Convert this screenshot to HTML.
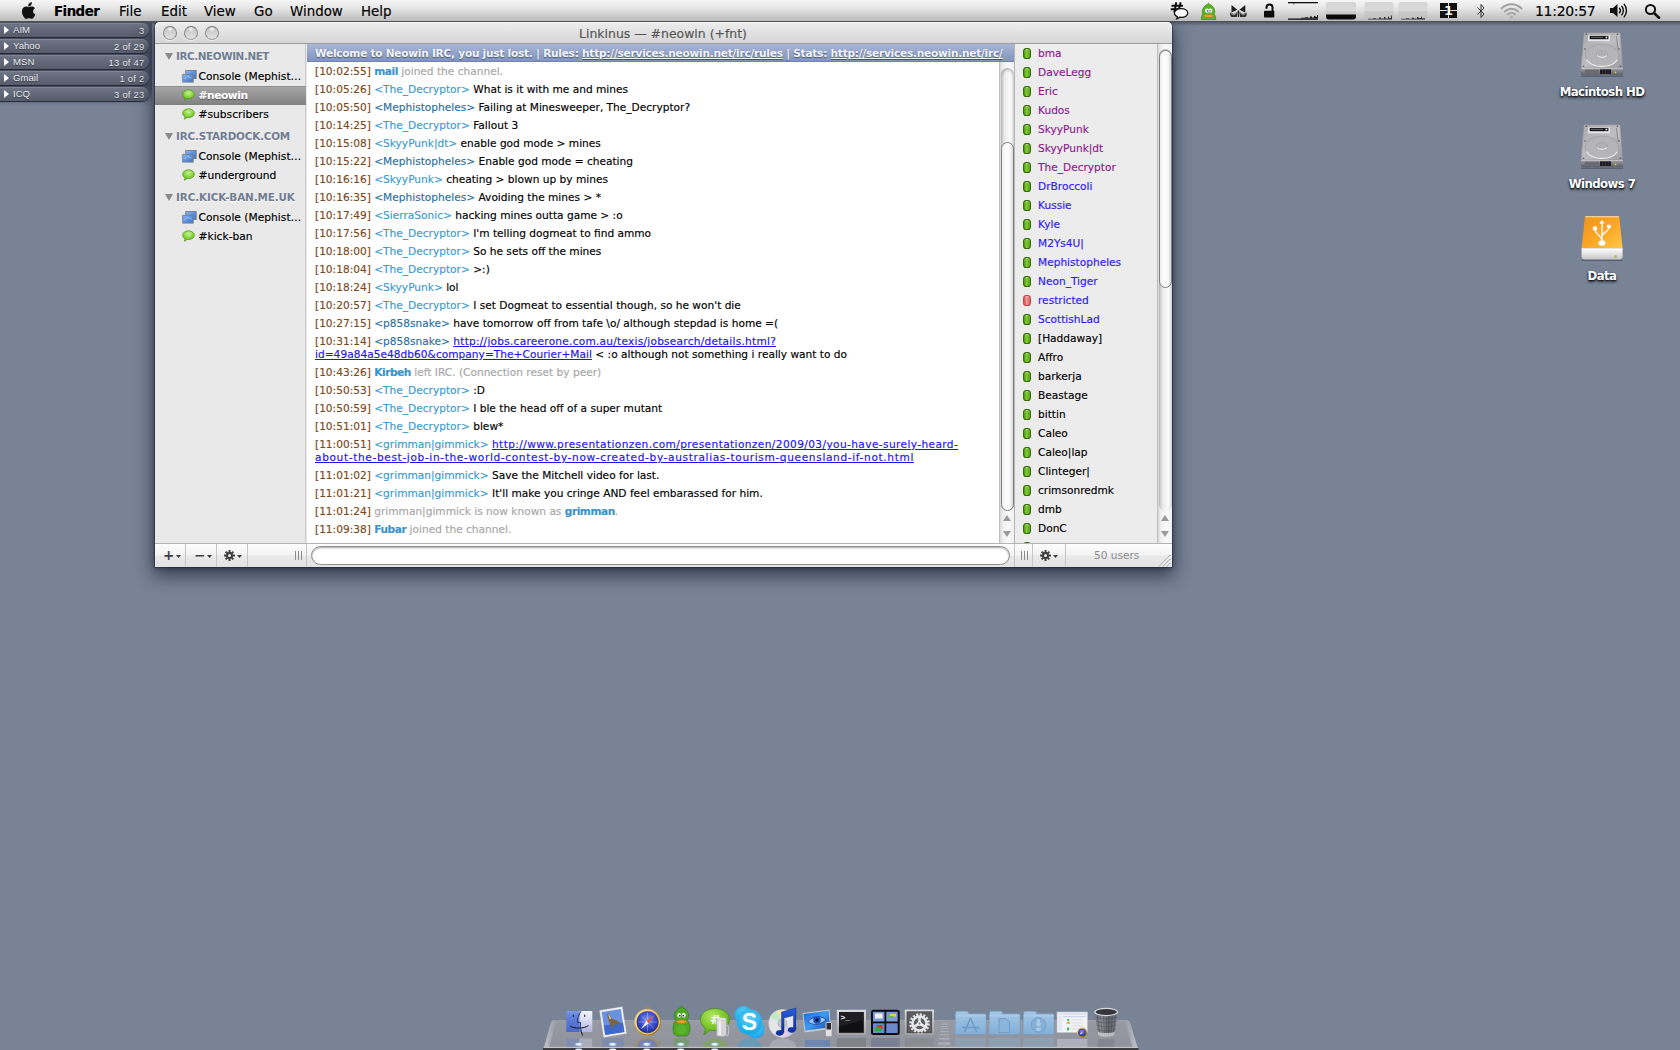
<!DOCTYPE html>
<html lang="en"><head><meta charset="utf-8"><title>Linkinus — #neowin (+fnt)</title>
<style>
*{box-sizing:border-box}
html,body{margin:0;padding:0}
body{width:1680px;height:1050px;overflow:hidden;position:relative;background:#788396;font-family:"DejaVu Sans","Liberation Sans",sans-serif;font-size:10.6px;color:#000;-webkit-font-smoothing:antialiased}
.abs{position:absolute}
/* menubar */
#menubar{position:absolute;left:0;top:0;width:1680px;height:22px;background:linear-gradient(#f6f6f6 0%,#e6e6e6 40%,#d6d6d6 60%,#bcbcbc 100%);border-bottom:1px solid #525252;z-index:5}
#mbshadow{position:absolute;left:0;top:22px;width:1680px;height:4px;background:linear-gradient(rgba(20,25,45,.38),rgba(20,25,45,0))}
#menubar .mi{position:absolute;top:1px;height:21px;line-height:21px;font-size:13.4px;color:#000;white-space:pre}
#menubar .mi.b{font-weight:bold;letter-spacing:-.55px}
/* adium */
#adium{position:absolute;left:0;top:22px;width:152px;height:84px;background:linear-gradient(180deg,#4b5265 0,#4d5467 80%,rgba(77,84,103,0) 100%)}
#adium .pill{position:absolute;left:-8px;width:157px;height:14px;border-radius:7px;background:linear-gradient(#717787 0%,#636978 45%,#565c6a 100%);box-shadow:0 1px 1px rgba(25,30,45,.9), inset 0 1px 0 rgba(255,255,255,.10);color:#e8ebf0;font-family:"Liberation Sans",sans-serif;font-size:9.6px;line-height:13px}
#adium .pill .tri{position:absolute;left:12px;top:3px;width:0;height:0;border-left:5px solid #fff;border-top:4px solid transparent;border-bottom:4px solid transparent}
#adium .pill .n{position:absolute;left:21px;top:0;text-shadow:0 1px 1px rgba(0,0,0,.45)}
#adium .pill .c{position:absolute;right:4.5px;top:1px;font-size:9.4px;letter-spacing:.25px;text-shadow:0 1px 1px rgba(0,0,0,.45)}
/* window */
#win{position:absolute;left:155px;top:22px;width:1017px;height:545px;background:#e8e8e8;border-radius:5px 5px 0 0;box-shadow:0 7px 18px 2px rgba(15,20,40,.62),0 1px 4px rgba(15,20,40,.5),0 0 0 1px rgba(50,52,65,.4)}
#tb{position:absolute;left:0;top:0;width:1017px;height:22px;border-radius:5px 5px 0 0;background:linear-gradient(#ededed,#d6d6d6);border-bottom:1px solid #9c9c9c;box-shadow:inset 0 1px 0 #f8f8f8}
#tb .title{position:absolute;left:0;width:1016px;top:1px;line-height:21px;text-align:center;font-size:12.45px;color:#555}
#tb .tl{position:absolute;top:4px;width:14px;height:14px;border-radius:50%;background:radial-gradient(circle at 50% 16%,rgba(255,255,255,.95) 0,rgba(255,255,255,.0) 26%),linear-gradient(#c4c4c4,#e2e2e2);border:1px solid;border-color:#787878 #888 #9e9e9e;box-shadow:0 1px 0 rgba(255,255,255,.6)}
#side{position:absolute;left:0;top:22px;width:151px;height:500px;background:#e9e9e9;border-right:1px solid #c9c9c9}
#side .g{position:absolute;left:21px;font-weight:bold;color:#707c92;text-shadow:0 1px 0 #fff;white-space:pre;line-height:14px;font-size:10.4px}
#side .gt{position:absolute;left:10px;width:0;height:0;border-top:7px solid #8a8a8a;border-left:4px solid transparent;border-right:4px solid transparent}
#side .it{position:absolute;left:43.500px;font-size:10.7px;white-space:pre;line-height:14px;color:#000}
#side .sel{position:absolute;left:0;width:151px;height:19px;background:linear-gradient(#a6a6a6,#808080);border-top:1px solid #8e8e8e}
#side .bub{position:absolute;left:27px;width:13px;height:12px}
#side .con{position:absolute;left:27px;width:15px;height:13px}
#chat{position:absolute;left:152px;top:22px;width:693px;height:500px;background:#fff;overflow:hidden}
#topic{position:absolute;left:152px;top:22px;width:707px;height:18px;background:linear-gradient(#a9b6d6,#8394bf);color:#f4f6fc;font-weight:normal;line-height:19px;padding-left:8px;white-space:pre;text-shadow:0 1px 1px rgba(40,50,90,.7);border-bottom:1px solid #7283b0}
#topic u{text-decoration:underline}
.m{position:absolute;left:8px;width:680px;line-height:13px;white-space:pre}
.ts{color:#7a4a1e}
.nk{color:#3a9ad0}
.nk2{color:#2b6f9c}
.gy{color:#a6a6a6}
.bn{color:#3a93c8;font-weight:bold}
.m a{color:#1a10e0;text-decoration:underline}
/* scrollers */
.scr{position:absolute;width:15px;background:linear-gradient(90deg,#cfcfcf 0,#f2f2f2 25%,#fbfbfb 60%,#e6e6e6 100%);border-left:1px solid #b4b4b4}
.knob{position:absolute;left:1px;width:13px;border-radius:7px;background:linear-gradient(90deg,#e9e9e9 0,#ffffff 35%,#f4f4f4 70%,#cfcfcf 100%);border:1px solid #8e8e8e}
/* users */
#users{position:absolute;left:859px;top:22px;width:143px;border-left:1px solid #b4b4b4;height:500px;background:#ececec;overflow:hidden}
#users .u{position:absolute;left:23px;white-space:pre;line-height:14px}
#users .d{position:absolute;left:8px;width:7.500px;height:10.500px;border-radius:3.200px/3.600px;background:linear-gradient(90deg,#439010,#84cc34 42%,#4e9e14);border:1px solid #376c0e;box-shadow:inset 0 1px 1px rgba(255,255,255,.35)}
#users .d.r{background:linear-gradient(90deg,#d24a4a,#f59a9a 45%,#d85a5a);border-color:#c04848}
.op{color:#8b1a8b}.vo{color:#2a14e6}
/* bottom */
#bot{position:absolute;left:0;top:522px;width:1016px;height:23px;background:linear-gradient(#fafafa,#e6e6e6 50%,#dcdcdc);border-top:1px solid #b9b9b9}
#topic{font-weight:bold;letter-spacing:-0.23px;font-size:10.55px}
.bn{letter-spacing:-0.45px}
#side .g{letter-spacing:-0.42px}
/* bottom bar details */
#bot{top:521px;width:1017px;height:24px;background:linear-gradient(#fdfdfd 0,#f3f3f3 48%,#e9e9e9 52%,#e2e2e2 100%);border-top:1px solid #b4b4b4}
#bot .dv{position:absolute;top:0;width:1px;height:23px;background:#c6c6c6}
#bot .grip{position:absolute;top:7px;width:7px;height:9px;background:linear-gradient(90deg,#8c8c8c 0 1px,transparent 1px 3px,#8c8c8c 3px 4px,transparent 4px 6px,#8c8c8c 6px 7px)}
#bot .arr{position:absolute;top:11px;width:5px;height:3px;background:#3c3c3c;clip-path:polygon(0 0,100% 0,50% 100%)}
#bot .pm{position:absolute;top:1px;line-height:21px;font-size:13.5px;font-weight:bold;color:#404040}
#inp{position:absolute;left:156px;top:2px;width:699px;height:19px;border-radius:9.500px;background:#fff;border:1px solid #8f8f8f;box-shadow:inset 0 1px 2px rgba(0,0,0,.35)}
#bot .cnt{position:absolute;left:939px;top:4px;line-height:14px;color:#8c8c8c;font-size:10.55px}
.sarr{position:absolute;left:3px;width:0;height:0;border-left:4px solid transparent;border-right:4px solid transparent}
.sarr.up{border-bottom:6px solid #9a9a9a}
.sarr.dn{border-top:6px solid #9a9a9a}
.scr{width:15px;background:linear-gradient(90deg,#d8d8d8 0,#efefef 20%,#fafafa 60%,#f0f0f0 100%);border-left:1px solid #bdbdbd}
.trk{position:absolute;left:1px;width:13px;border-radius:7px;background:linear-gradient(90deg,#c9c9c9 0,#ececec 30%,#fbfbfb 70%,#e4e4e4 100%);box-shadow:inset 0 2px 3px rgba(0,0,0,.25)}
.knob{left:1px;width:13px;border-radius:7px;background:linear-gradient(90deg,#ededed 0,#ffffff 40%,#f6f6f6 75%,#d4d4d4 100%);border:1px solid #7f7f7f}
.dl{position:absolute;left:1502px;margin-top:1px;width:200px;text-align:center;color:#fff;font-weight:bold;font-size:11.7px;line-height:15px;letter-spacing:-0.55px;text-shadow:0 1px 2px rgba(0,0,0,.9),0 2px 3px rgba(0,0,0,.6);white-space:pre}
.m,#users .u,#side .it,#menubar .mi,#tb .title{-webkit-text-stroke:0.15px currentColor}
.m a{color:#1c14f0}
.vo{color:#2c18f2}.op{color:#8e188e}

</style></head>
<body>
<div id="mbshadow"></div>
<div id="menubar">
<svg class="abs" style="left:19px;top:2px" width="19" height="18" viewBox="0 0 19 18"><path d="M12.9 0.3c.1 1.1-.3 2.1-1 2.9-.7.8-1.700 1.300-2.700 1.200-.1-1 .4-2.100 1-2.800.7-.8 1.900-1.300 2.700-1.300zM15.900 6.200c-.1.100-1.800 1-1.800 3.100 0 2.400 2.200 3.200 2.200 3.200 0 .100-.3 1.200-1.100 2.300-.7 1-1.400 2-2.500 2-1.100 0-1.400-.6-2.700-.6-1.200 0-1.600.600-2.700.7-1.100 0-1.900-1.100-2.600-2.100-1.400-2-2.500-5.700-1-8.200.7-1.200 2-2 3.400-2 1.100 0 2.100.7 2.700.7.700 0 1.900-.9 3.200-.7.500 0 2.100.2 2.900 1.600z" fill="#111"/></svg>
<span class="mi b" style="left:54px">Finder</span>
<span class="mi" style="left:119px">File</span>
<span class="mi" style="left:161px">Edit</span>
<span class="mi" style="left:204px">View</span>
<span class="mi" style="left:254px">Go</span>
<span class="mi" style="left:290px">Window</span>
<span class="mi" style="left:361px">Help</span>
<!-- linkinus status icon -->
<svg class="abs" style="left:1168px;top:0px" width="24" height="22" viewBox="1168 0 24 22"><g stroke="#0c0c0c" stroke-width="1.900" fill="none" stroke-linecap="butt"><path d="M1176.300 2.200L1174.300 12.500M1180.700 2.200L1178.700 10M1171.500 5.700H1183M1170.800 9.300H1179"/></g><path d="M1181 8.600C1184.800 8.600 1187.700 10.500 1187.700 13C1187.700 15.500 1184.800 17.300 1181 17.300C1180.500 17.300 1180 17.300 1179.600 17.200C1179 18.100 1178 18.700 1176.700 18.800C1177.300 18.100 1177.500 17.300 1177.300 16.600C1175.500 15.800 1174.400 14.500 1174.400 13C1174.400 10.500 1177.300 8.600 1181 8.600z" fill="#fff" stroke="#0c0c0c" stroke-width="1.300"/></svg>
<!-- adium duck -->
<svg class="abs" style="left:1199px;top:2px" width="19" height="19" viewBox="1199 2 19 19"><path d="M1208.500 3.200C1209.500 4.500 1212 5.300 1213.500 7.500C1215 9.800 1215 12 1214.200 13.800C1215.200 15.500 1215.800 17.500 1215.700 19.600H1201.300C1201.200 17.500 1201.800 15.500 1202.800 13.800C1202 12 1202 9.800 1203.500 7.500C1205 5.300 1207.500 4.500 1208.500 3.200z" fill="#58b424" stroke="#3c8e14" stroke-width=".8"/><ellipse cx="1207" cy="10.600" rx="1.900" ry="2.200" fill="#fff"/><ellipse cx="1210.400" cy="10.600" rx="1.900" ry="2.200" fill="#fff"/><circle cx="1207.400" cy="10.900" r=".8" fill="#3a5ab0"/><circle cx="1210" cy="10.900" r=".8" fill="#3a5ab0"/><path d="M1203.200 15.800C1205 14 1212 14 1213.800 15.800C1212 18 1205 18 1203.200 15.800z" fill="#f2a03a" stroke="#c06a14" stroke-width=".5"/></svg>
<!-- bowtie -->
<svg class="abs" style="left:1228px;top:3px" width="21" height="16" viewBox="1228 3 21 16"><path d="M1231.500 5L1237.300 9.800L1231.500 12.500zM1245.300 5L1239.500 9.800L1245.300 12.500z" fill="#1e1e1e"/><path d="M1230.300 12.500C1229.800 14.500 1230.300 16 1231.500 17H1236.700L1237.500 11.500L1234 14.200zM1246.500 12.500C1247 14.500 1246.500 16 1245.300 17H1240.100L1239.300 11.500L1242.800 14.200z" fill="#2c2c2c"/><rect x="1237.700" y="10.500" width="1.400" height="6.500" fill="#1e1e1e"/><path d="M1231 13.500L1234 15L1237 12.500M1245.800 13.500L1242.800 15L1239.800 12.500" fill="none" stroke="#c4c4c4" stroke-width=".7"/></svg>
<!-- open lock -->
<svg class="abs" style="left:1261px;top:2px" width="16" height="18" viewBox="1261 2 16 18"><path d="M1266.500 8.800V7.500C1266.500 5.500 1267.800 4.500 1269.500 4.500C1271.200 4.500 1272.500 5.500 1272.500 7.500V11" fill="none" stroke="#0c0c0c" stroke-width="2"/><rect x="1264" y="10.700" width="10.300" height="6.900" rx=".8" fill="#0c0c0c"/></svg>
<!-- istat cpu -->
<svg class="abs" style="left:1287px;top:1px" width="32" height="20" viewBox="0 0 32 20"><rect x="1" y="1" width="30" height="1.300" fill="#111"/><rect x="1" y="17.500" width="30" height="1.300" fill="#111"/><path d="M14 17.500V16.800H18V16.200H21V16.800H23V15.600H25V16.500H27V15H28.500V16H30V14H31V17.500z" fill="#111"/><rect x="6" y="2.300" width="1.500" height="1" fill="#555"/></svg>
<!-- istat mem -->
<svg class="abs" style="left:1325px;top:1px" width="32" height="20" viewBox="0 0 32 20"><defs><linearGradient id="ig" x1="0" y1="0" x2="0" y2="1"><stop offset="0" stop-color="#d4d4d4"/><stop offset=".5" stop-color="#dadada"/><stop offset=".52" stop-color="#cbcbcb"/><stop offset="1" stop-color="#c0c0c0"/></linearGradient><clipPath id="ic"><rect x="1" y="1" width="30" height="17.500" rx="3"/></clipPath></defs><rect x="1" y="1" width="30" height="17.500" rx="3" fill="url(#ig)"/><rect x="1" y="13.500" width="30" height="6" fill="#0a0a0a" clip-path="url(#ic)"/></svg>
<!-- istat net 1 -->
<svg class="abs" style="left:1363px;top:1px" width="32" height="20" viewBox="0 0 32 20"><rect x="1.500" y="1" width="29" height="17.500" rx="3" fill="url(#ig)"/><path d="M5 18.500V17.800H10V17.200H13V17.800H16V16.500H18V17.500H21V16H22.500V17.500H25V15.500H26V17H28V14.500H29V18.500z" fill="#333"/></svg>
<!-- istat net 2 -->
<svg class="abs" style="left:1397px;top:1px" width="32" height="20" viewBox="0 0 32 20"><rect x="1.500" y="1" width="29" height="17.500" rx="3" fill="url(#ig)"/><path d="M4 18.500V17.800H9V17.200H12V17.800H15V16.800H17V17.500H20V16H21.500V17H24V15.800H25V17.300H28V18.500z" fill="#333"/></svg>
<!-- spaces -->
<div class="abs" style="left:1440px;top:3px;width:17px;height:15px;background:#111"></div>
<div class="abs" style="left:1440px;top:10px;width:17px;height:1px;background:#e4e4e4"></div>
<div class="abs" style="left:1448px;top:3px;width:1px;height:15px;background:#e4e4e4"></div>
<span class="abs" style="left:1443px;top:2px;width:11px;height:17px;line-height:17px;text-align:center;color:#fff;font-size:13px;font-weight:bold;text-shadow:0 0 1px #111,0 0 1px #111">1</span>
<!-- bluetooth -->
<svg class="abs" style="left:1476px;top:3px" width="10" height="16" viewBox="0 0 10 16"><path d="M1.500 4.500L8 11L5 14.500V1.500L8 5L1.500 11.500" fill="none" stroke="#333" stroke-width="1" stroke-linejoin="miter"/></svg>
<!-- wifi -->
<svg class="abs" style="left:1500px;top:2px" width="23" height="17" viewBox="0 0 23 17"><g fill="none" stroke="#a2a2a2" stroke-width="2" stroke-linecap="round"><path d="M1.500 6.500C7 .8 16 .8 21.500 6.500"/><path d="M4.800 9.500C8.500 5.800 14.500 5.800 18.200 9.500"/><path d="M8 12.300C10 10.400 13 10.400 15 12.300"/></g><circle cx="11.500" cy="15" r="1.300" fill="#a8a8a8"/></svg>
<span class="mi" style="left:1535px;font-size:14px;letter-spacing:-.3px">11:20:57</span>
<!-- volume -->
<svg class="abs" style="left:1609px;top:3px" width="19" height="15" viewBox="0 0 19 15"><path d="M1 5H4L8.500 1V14L4 10H1z" fill="#111"/><g fill="none" stroke="#111" stroke-width="1.400" stroke-linecap="round"><path d="M10.500 5.200C11.600 6.500 11.600 8.500 10.500 9.800"/><path d="M12.800 3.200C14.800 5.500 14.800 9.500 12.800 11.800"/><path d="M15.200 1.200C18.200 4.800 18.200 10.200 15.200 13.800"/></g></svg>
<!-- spotlight -->
<svg class="abs" style="left:1644px;top:3px" width="17" height="16" viewBox="0 0 17 16"><circle cx="6.500" cy="6.500" r="4.600" fill="none" stroke="#111" stroke-width="2"/><path d="M10 10L15 14.800" stroke="#111" stroke-width="2.600" stroke-linecap="round"/></svg>
</div>
<div id="adium">
<div class="pill" style="top:1px"><i class="tri"></i><span class="n">AIM</span><span class="c">3</span></div>
<div class="pill" style="top:17px"><i class="tri"></i><span class="n">Yahoo</span><span class="c">2 of 29</span></div>
<div class="pill" style="top:33px"><i class="tri"></i><span class="n">MSN</span><span class="c">13 of 47</span></div>
<div class="pill" style="top:49px"><i class="tri"></i><span class="n">Gmail</span><span class="c">1 of 2</span></div>
<div class="pill" style="top:65px"><i class="tri"></i><span class="n">ICQ</span><span class="c">3 of 23</span></div>
</div>
<div id="win">
<div id="tb"><i class="tl" style="left:8px"></i><i class="tl" style="left:29px"></i><i class="tl" style="left:50px"></i><div class="title">Linkinus — #neowin (+fnt)</div></div>
<div id="side">
<i class="gt" style="top:9px"></i><span class="g" style="top:5px"><span>IRC.NEOWIN.NET</span></span>
<svg class="con" style="top:26px" viewBox="0 0 15 13"><defs><linearGradient id="cg" x1="0" y1="0" x2="1" y2="1"><stop offset="0" stop-color="#8db8f0"/><stop offset=".5" stop-color="#5c92e0"/><stop offset="1" stop-color="#3f74c8"/></linearGradient></defs><rect x="3.700" y="0.500" width="10.500" height="8" fill="url(#cg)" stroke="#77808f" stroke-width=".9"/><rect x="0.700" y="4.300" width="10.500" height="7.800" fill="url(#cg)" stroke="#77808f" stroke-width=".9"/><path d="M2 9L6 6.500L9.500 8" stroke="#b9d6fa" stroke-width=".8" fill="none" opacity=".7"/></svg><span class="it" style="top:26px">Console (Mephist…</span>
<div class="sel" style="top:42px"></div>
<svg class="bub" style="top:45px" viewBox="0 0 13 12"><defs><radialGradient id="bg" cx=".5" cy=".3" r=".7"><stop offset="0" stop-color="#c4f292"/><stop offset=".6" stop-color="#86d238"/><stop offset="1" stop-color="#58a818"/></radialGradient></defs><path d="M6.500 .8C9.800 .8 12.300 2.700 12.300 5.200C12.300 7.700 9.800 9.600 6.500 9.600C5.900 9.600 5.300 9.500 4.800 9.400C4.200 10.300 3.300 11 2.300 11.200C2.900 10.500 3.100 9.600 2.900 8.800C1.500 8 .7 6.700 .7 5.200C.7 2.700 3.200 .8 6.500 .8z" fill="url(#bg)" stroke="#4c9a1c" stroke-width=".7"/></svg><span class="it" style="top:45px;color:#fff;font-weight:bold;letter-spacing:-.45px;text-shadow:0 1px 1px rgba(0,0,0,.45)">#neowin</span>
<svg class="bub" style="top:64px" viewBox="0 0 13 12"><defs><radialGradient id="bg" cx=".5" cy=".3" r=".7"><stop offset="0" stop-color="#c4f292"/><stop offset=".6" stop-color="#86d238"/><stop offset="1" stop-color="#58a818"/></radialGradient></defs><path d="M6.500 .8C9.800 .8 12.300 2.700 12.300 5.200C12.300 7.700 9.800 9.600 6.500 9.600C5.900 9.600 5.300 9.500 4.800 9.400C4.200 10.300 3.300 11 2.300 11.200C2.900 10.500 3.100 9.600 2.900 8.800C1.500 8 .7 6.700 .7 5.200C.7 2.700 3.200 .8 6.500 .8z" fill="url(#bg)" stroke="#4c9a1c" stroke-width=".7"/></svg><span class="it" style="top:64px">#subscribers</span>
<i class="gt" style="top:89px"></i><span class="g" style="top:85px"><span style="letter-spacing:-.2px">IRC.STARDOCK.COM</span></span>
<svg class="con" style="top:106px" viewBox="0 0 15 13"><defs><linearGradient id="cg" x1="0" y1="0" x2="1" y2="1"><stop offset="0" stop-color="#8db8f0"/><stop offset=".5" stop-color="#5c92e0"/><stop offset="1" stop-color="#3f74c8"/></linearGradient></defs><rect x="3.700" y="0.500" width="10.500" height="8" fill="url(#cg)" stroke="#77808f" stroke-width=".9"/><rect x="0.700" y="4.300" width="10.500" height="7.800" fill="url(#cg)" stroke="#77808f" stroke-width=".9"/><path d="M2 9L6 6.500L9.500 8" stroke="#b9d6fa" stroke-width=".8" fill="none" opacity=".7"/></svg><span class="it" style="top:106px">Console (Mephist…</span>
<svg class="bub" style="top:125px" viewBox="0 0 13 12"><defs><radialGradient id="bg" cx=".5" cy=".3" r=".7"><stop offset="0" stop-color="#c4f292"/><stop offset=".6" stop-color="#86d238"/><stop offset="1" stop-color="#58a818"/></radialGradient></defs><path d="M6.500 .8C9.800 .8 12.300 2.700 12.300 5.200C12.300 7.700 9.800 9.600 6.500 9.600C5.900 9.600 5.300 9.500 4.800 9.400C4.200 10.300 3.300 11 2.300 11.200C2.900 10.500 3.100 9.600 2.900 8.800C1.500 8 .7 6.700 .7 5.200C.7 2.700 3.200 .8 6.500 .8z" fill="url(#bg)" stroke="#4c9a1c" stroke-width=".7"/></svg><span class="it" style="top:125px">#underground</span>
<i class="gt" style="top:150px"></i><span class="g" style="top:146px"><span style="letter-spacing:-.12px">IRC.KICK-BAN.ME.UK</span></span>
<svg class="con" style="top:167px" viewBox="0 0 15 13"><defs><linearGradient id="cg" x1="0" y1="0" x2="1" y2="1"><stop offset="0" stop-color="#8db8f0"/><stop offset=".5" stop-color="#5c92e0"/><stop offset="1" stop-color="#3f74c8"/></linearGradient></defs><rect x="3.700" y="0.500" width="10.500" height="8" fill="url(#cg)" stroke="#77808f" stroke-width=".9"/><rect x="0.700" y="4.300" width="10.500" height="7.800" fill="url(#cg)" stroke="#77808f" stroke-width=".9"/><path d="M2 9L6 6.500L9.500 8" stroke="#b9d6fa" stroke-width=".8" fill="none" opacity=".7"/></svg><span class="it" style="top:167px">Console (Mephist…</span>
<svg class="bub" style="top:186px" viewBox="0 0 13 12"><defs><radialGradient id="bg" cx=".5" cy=".3" r=".7"><stop offset="0" stop-color="#c4f292"/><stop offset=".6" stop-color="#86d238"/><stop offset="1" stop-color="#58a818"/></radialGradient></defs><path d="M6.500 .8C9.800 .8 12.300 2.700 12.300 5.200C12.300 7.700 9.800 9.600 6.500 9.600C5.900 9.600 5.300 9.500 4.800 9.400C4.200 10.300 3.300 11 2.300 11.200C2.900 10.500 3.100 9.600 2.900 8.800C1.500 8 .7 6.700 .7 5.200C.7 2.700 3.200 .8 6.500 .8z" fill="url(#bg)" stroke="#4c9a1c" stroke-width=".7"/></svg><span class="it" style="top:186px">#kick-ban</span>
</div>
<div id="chat">
<div class="m" style="top:21px"><span class="ts">[10:02:55]</span> <span class="bn">mail</span><span class="gy"> joined the channel.</span></div>
<div class="m" style="top:39px"><span class="ts">[10:05:26]</span> <span class="nk">&lt;The_Decryptor&gt;</span> What is it with me and mines</div>
<div class="m" style="top:57px"><span class="ts">[10:05:50]</span> <span class="nk2">&lt;Mephistopheles&gt;</span> Failing at Minesweeper, The_Decryptor?</div>
<div class="m" style="top:75px"><span class="ts">[10:14:25]</span> <span class="nk">&lt;The_Decryptor&gt;</span> Fallout 3</div>
<div class="m" style="top:93px"><span class="ts">[10:15:08]</span> <span class="nk">&lt;SkyyPunk|dt&gt;</span> enable god mode &gt; mines</div>
<div class="m" style="top:111px"><span class="ts">[10:15:22]</span> <span class="nk2">&lt;Mephistopheles&gt;</span> Enable god mode = cheating</div>
<div class="m" style="top:129px"><span class="ts">[10:16:16]</span> <span class="nk">&lt;SkyyPunk&gt;</span> cheating &gt; blown up by mines</div>
<div class="m" style="top:147px"><span class="ts">[10:16:35]</span> <span class="nk2">&lt;Mephistopheles&gt;</span> Avoiding the mines &gt; *</div>
<div class="m" style="top:165px"><span class="ts">[10:17:49]</span> <span class="nk">&lt;SierraSonic&gt;</span> hacking mines outta game &gt; :o</div>
<div class="m" style="top:183px"><span class="ts">[10:17:56]</span> <span class="nk">&lt;The_Decryptor&gt;</span> I'm telling dogmeat to find ammo</div>
<div class="m" style="top:201px"><span class="ts">[10:18:00]</span> <span class="nk">&lt;The_Decryptor&gt;</span> So he sets off the mines</div>
<div class="m" style="top:219px"><span class="ts">[10:18:04]</span> <span class="nk">&lt;The_Decryptor&gt;</span> &gt;:)</div>
<div class="m" style="top:237px"><span class="ts">[10:18:24]</span> <span class="nk">&lt;SkyyPunk&gt;</span> lol</div>
<div class="m" style="top:255px"><span class="ts">[10:20:57]</span> <span class="nk">&lt;The_Decryptor&gt;</span> I set Dogmeat to essential though, so he won't die</div>
<div class="m" style="top:273px"><span class="ts">[10:27:15]</span> <span class="nk2">&lt;p858snake&gt;</span> have tomorrow off from tafe \o/ although stepdad is home =(</div>
<div class="m" style="top:291px"><span class="ts">[10:31:14]</span> <span class="nk2">&lt;p858snake&gt;</span> <a style="letter-spacing:0.235px">http://jobs.careerone.com.au/texis/jobsearch/details.html?</a>
<a style="letter-spacing:0.026px">id=49a84a5e48db60&amp;company=The+Courier+Mail</a> &lt; :o although not something i really want to do</div>
<div class="m" style="top:322px"><span class="ts">[10:43:26]</span> <span class="bn">Kirbeh</span><span class="gy"> left IRC. (Connection reset by peer)</span></div>
<div class="m" style="top:340px"><span class="ts">[10:50:53]</span> <span class="nk">&lt;The_Decryptor&gt;</span> :D</div>
<div class="m" style="top:358px"><span class="ts">[10:50:59]</span> <span class="nk">&lt;The_Decryptor&gt;</span> I ble the head off of a super mutant</div>
<div class="m" style="top:376px"><span class="ts">[10:51:01]</span> <span class="nk">&lt;The_Decryptor&gt;</span> blew*</div>
<div class="m" style="top:394px"><span class="ts">[11:00:51]</span> <span class="nk">&lt;grimman|gimmick&gt;</span> <a style="letter-spacing:0.385px">http://www.presentationzen.com/presentationzen/2009/03/you-have-surely-heard-</a>
<a style="letter-spacing:0.634px">about-the-best-job-in-the-world-contest-by-now-created-by-australias-tourism-queensland-if-not.html</a></div>
<div class="m" style="top:425px"><span class="ts">[11:01:02]</span> <span class="nk">&lt;grimman|gimmick&gt;</span> Save the Mitchell video for last.</div>
<div class="m" style="top:443px"><span class="ts">[11:01:21]</span> <span class="nk">&lt;grimman|gimmick&gt;</span> It'll make you cringe AND feel embarassed for him.</div>
<div class="m" style="top:461px"><span class="ts">[11:01:24]</span> <span class="gy">grimman|gimmick is now known as </span><span class="bn">grimman</span><span class="gy">.</span></div>
<div class="m" style="top:479px"><span class="ts">[11:09:38]</span> <span class="bn">Fubar</span><span class="gy"> joined the channel.</span></div>
</div>
<div id="topic"><span id="tt">Welcome to Neowin IRC, you just lost. | Rules: <u>http://services.neowin.net/irc/rules</u> | Stats: <u>http://services.neowin.net/irc/</u></span></div>
<div class="scr" style="left:844px;top:40px;height:481px"><i class="trk" style="top:6px;height:443px"></i><i class="knob" style="top:80px;height:369px"></i><i class="sarr up" style="top:453px"></i><i class="sarr dn" style="top:469px"></i></div>
<div id="users">
<i class="d" style="top:4px"></i><span class="u op" style="top:2px">bma</span>
<i class="d" style="top:23px"></i><span class="u op" style="top:21px">DaveLegg</span>
<i class="d" style="top:42px"></i><span class="u op" style="top:40px">Eric</span>
<i class="d" style="top:61px"></i><span class="u op" style="top:59px">Kudos</span>
<i class="d" style="top:80px"></i><span class="u op" style="top:78px">SkyyPunk</span>
<i class="d" style="top:99px"></i><span class="u op" style="top:97px">SkyyPunk|dt</span>
<i class="d" style="top:118px"></i><span class="u op" style="top:116px">The_Decryptor</span>
<i class="d" style="top:137px"></i><span class="u vo" style="top:135px">DrBroccoli</span>
<i class="d" style="top:156px"></i><span class="u vo" style="top:154px">Kussie</span>
<i class="d" style="top:175px"></i><span class="u vo" style="top:173px">Kyle</span>
<i class="d" style="top:194px"></i><span class="u vo" style="top:192px">M2Ys4U|</span>
<i class="d" style="top:213px"></i><span class="u vo" style="top:211px">Mephistopheles</span>
<i class="d" style="top:232px"></i><span class="u vo" style="top:230px">Neon_Tiger</span>
<i class="d r" style="top:251px"></i><span class="u vo" style="top:249px">restricted</span>
<i class="d" style="top:270px"></i><span class="u vo" style="top:268px">ScottishLad</span>
<i class="d" style="top:289px"></i><span class="u " style="top:287px">[Haddaway]</span>
<i class="d" style="top:308px"></i><span class="u " style="top:306px">Affro</span>
<i class="d" style="top:327px"></i><span class="u " style="top:325px">barkerja</span>
<i class="d" style="top:346px"></i><span class="u " style="top:344px">Beastage</span>
<i class="d" style="top:365px"></i><span class="u " style="top:363px">bittin</span>
<i class="d" style="top:384px"></i><span class="u " style="top:382px">Caleo</span>
<i class="d" style="top:403px"></i><span class="u " style="top:401px">Caleo|lap</span>
<i class="d" style="top:422px"></i><span class="u " style="top:420px">Clinteger|</span>
<i class="d" style="top:441px"></i><span class="u " style="top:439px">crimsonredmk</span>
<i class="d" style="top:460px"></i><span class="u " style="top:458px">dmb</span>
<i class="d" style="top:479px"></i><span class="u " style="top:477px">DonC</span>
<i class="d" style="top:498px"></i>
</div>
<div class="scr" style="left:1002px;top:22px;height:499px"><i class="trk" style="top:5px;height:462px"></i><i class="knob" style="top:6px;height:238px"></i><i class="sarr up" style="top:471px"></i><i class="sarr dn" style="top:487px"></i></div>
<div id="bot"><span class="pm" style="left:8px">+</span><i class="arr" style="left:21px"></i><i class="dv" style="left:30px"></i><span class="pm" style="left:39px">−</span><i class="arr" style="left:52px"></i><i class="dv" style="left:61px"></i><svg class="abs" style="left:69px;top:6px" width="11" height="11" viewBox="-5.500 -5.500 11 11"><g fill="#3e3e3e"><circle r="3.400"/><g id="t"><rect x="-1" y="-5.500" width="2" height="11"/><rect x="-1" y="-5.500" width="2" height="11" transform="rotate(45)"/><rect x="-1" y="-5.500" width="2" height="11" transform="rotate(90)"/><rect x="-1" y="-5.500" width="2" height="11" transform="rotate(135)"/></g></g><circle r="1.500" fill="#efefef"/></svg><i class="arr" style="left:82px"></i><i class="dv" style="left:92px"></i><i class="grip" style="left:140px"></i><i class="dv" style="left:151px"></i><div id="inp"></div><i class="dv" style="left:859px"></i><i class="grip" style="left:866px"></i><i class="dv" style="left:877px"></i><svg class="abs" style="left:885px;top:6px" width="11" height="11" viewBox="-5.500 -5.500 11 11"><g fill="#3e3e3e"><circle r="3.400"/><g id="t"><rect x="-1" y="-5.500" width="2" height="11"/><rect x="-1" y="-5.500" width="2" height="11" transform="rotate(45)"/><rect x="-1" y="-5.500" width="2" height="11" transform="rotate(90)"/><rect x="-1" y="-5.500" width="2" height="11" transform="rotate(135)"/></g></g><circle r="1.500" fill="#efefef"/></svg><i class="arr" style="left:898px"></i><i class="dv" style="left:910px"></i><span class="cnt">50 users</span><svg class="abs" style="left:1003px;top:10px" width="13" height="13" viewBox="0 0 13 13"><path d="M12.5 1L1 12.500M12.500 5L5 12.500M12.500 9L9 12.500" stroke="#8a8a8a" stroke-width="1"/><path d="M12.500 2L2 12.500M12.500 6L6 12.500M12.500 10L10 12.500" stroke="#fff" stroke-width="1"/></svg></div>
</div>
<div id="desk">
<svg class="abs" style="left:1570px;top:26px" width="64" height="56" viewBox="1570 26 64 56">
<defs>
<linearGradient id="hdtop" x1="0" y1="0" x2="1" y2="1"><stop offset="0" stop-color="#a9a9ad"/><stop offset=".5" stop-color="#bdbdc1"/><stop offset="1" stop-color="#9d9da2"/></linearGradient>
<linearGradient id="hdfr" x1="0" y1="0" x2="0" y2="1"><stop offset="0" stop-color="#9a9aa0"/><stop offset=".5" stop-color="#7c7c84"/><stop offset="1" stop-color="#5e5e66"/></linearGradient>
<g id="hdd">
<path d="M1581.500 75.500L1623 75.500L1623.500 77L1581 77z" fill="rgba(30,35,50,.35)"/>
<path d="M1584.500 32.800H1619.500Q1620.200 32.800 1620.300 33.800L1623 68.200H1581L1583.700 33.800Q1583.800 32.800 1584.500 32.800z" fill="url(#hdtop)" stroke="#8a8a90" stroke-width=".6"/>
<rect x="1581" y="68.200" width="42" height="7" rx=".8" fill="url(#hdfr)"/>
<rect x="1581" y="68.200" width="42" height=".9" fill="#c9c9cd"/>
<rect x="1585" y="69.800" width="14" height="4" fill="#6a6a72"/>
<rect x="1600" y="69.400" width="11" height="4.600" fill="#1c1c20"/>
<path d="M1602.700 69.400V74M1605.500 69.400V74M1608.300 69.400V74" stroke="#4a4a50" stroke-width=".5"/>
<circle cx="1615.500" cy="72.300" r=".9" fill="#e8e020"/>
<rect x="1588" y="35.300" width="22" height="6" rx=".6" fill="#e6e6e8"/>
<rect x="1589.700" y="35.900" width="18.700" height="3.300" fill="#121214"/>
<rect x="1591" y="36.800" width="12" height="1.200" fill="#5a5a5e"/>
<rect x="1605.500" y="36.600" width="1.800" height="1.800" fill="#d8d8d8"/>
<ellipse cx="1602" cy="55.200" rx="16.800" ry="11.200" fill="#b4b4b9" stroke="#9c9ca2" stroke-width=".7"/>
<path d="M1586.500 59.500A16.800 11.200 0 0 0 1617.500 59.500" fill="none" stroke="#f0f0f2" stroke-width="1.100"/>
<ellipse cx="1602" cy="54" rx="5.700" ry="3.600" fill="#b0b0b5" stroke="#a2a2a8" stroke-width=".6"/>
<path d="M1597 55.500A5.700 3.600 0 0 0 1607 55.500" fill="none" stroke="#f2f2f4" stroke-width="1"/>
<path d="M1616.500 36L1618.300 49.500" stroke="#8c8c92" stroke-width="1.300"/>
<path d="M1617.600 36L1619.400 49.500" stroke="#d6d6da" stroke-width=".6"/>
<circle cx="1586.300" cy="34.300" r=".8" fill="#55555a"/><circle cx="1617.500" cy="34.300" r=".8" fill="#55555a"/><circle cx="1585" cy="49" r=".8" fill="#55555a"/><circle cx="1619" cy="49" r=".8" fill="#55555a"/><circle cx="1583.500" cy="66.300" r=".8" fill="#55555a"/><circle cx="1620.500" cy="66.300" r=".8" fill="#55555a"/>
</g>
</defs>
<use href="#hdd"/>
</svg>
<span class="dl" style="top:84px">Macintosh HD</span>
<svg class="abs" style="left:1570px;top:118px" width="64" height="56" viewBox="1570 26 64 56"><use href="#hdd"/></svg>
<span class="dl" style="top:176px">Windows 7</span>
<svg class="abs" style="left:1570px;top:210px" width="64" height="56" viewBox="1570 210 64 56">
<defs><linearGradient id="usbt" x1="0" y1="0" x2="1" y2="1"><stop offset="0" stop-color="#ec9420"/><stop offset=".5" stop-color="#fca524"/><stop offset="1" stop-color="#ffc84a"/></linearGradient>
<linearGradient id="usbf" x1="0" y1="0" x2="0" y2="1"><stop offset="0" stop-color="#ffffff"/><stop offset=".35" stop-color="#ececec"/><stop offset="1" stop-color="#c4c4c6"/></linearGradient></defs>
<path d="M1582 259.500H1622L1622.500 261H1581.500z" fill="rgba(30,35,50,.4)"/>
<path d="M1586 216.300H1618.400Q1619.200 216.300 1619.300 217.300L1622.600 248.200H1581.600L1584.900 217.300Q1585 216.300 1586 216.300z" fill="url(#usbt)"/>
<path d="M1586 216.300H1618.400Q1619.200 216.300 1619.300 217.300H1584.900Q1585 216.300 1586 216.300z" fill="#ffe2a8"/>
<path d="M1581.600 248.200H1622.600V256.500Q1622.600 259.500 1619.600 259.500H1584.600Q1581.600 259.500 1581.600 256.500z" fill="url(#usbf)"/>
<circle cx="1615.600" cy="256.600" r="1" fill="#c8c430" stroke="#8a8a40" stroke-width=".4"/>
<g fill="#fff" stroke="none"><ellipse cx="1602" cy="243" rx="3.500" ry="2.700"/><path d="M1602 220L1604.600 223.500H1599.400z"/><circle cx="1595" cy="228.500" r="2.300"/><rect x="1607" y="224.800" width="4" height="3.200" rx=".5"/></g>
<g fill="none" stroke="#fff" stroke-width="1.300"><path d="M1602 222.500V243"/><path d="M1595 229C1595 234.500 1602 236 1602 240.500"/><path d="M1609 227C1609 231.500 1602 233 1602 236.500"/></g>
</svg>
<span class="dl" style="top:268px">Data</span>
</div>
<svg id="dock" class="abs" style="left:530px;top:990px" width="620" height="60" viewBox="530 990 620 60">
<defs>
<linearGradient id="shelf" x1="0" y1="0" x2="0" y2="1"><stop offset="0" stop-color="#989ba3"/><stop offset=".3" stop-color="#94979f"/><stop offset="1" stop-color="#90939c"/></linearGradient>
<linearGradient id="shl" x1="0" y1="0" x2="1" y2="0"><stop offset="0" stop-color="#c2c4c9"/><stop offset="1" stop-color="#c2c4c9" stop-opacity="0"/></linearGradient>
<linearGradient id="shr" x1="1" y1="0" x2="0" y2="0"><stop offset="0" stop-color="#c2c4c9"/><stop offset="1" stop-color="#c2c4c9" stop-opacity="0"/></linearGradient>
<linearGradient id="refl" x1="0" y1="0" x2="0" y2="1"><stop offset="0" stop-color="#9b9ea6" stop-opacity=".55"/><stop offset="1" stop-color="#90949d" stop-opacity=".95"/></linearGradient>
<radialGradient id="ind"><stop offset="0" stop-color="#fff"/><stop offset=".45" stop-color="#d8ecff"/><stop offset="1" stop-color="#7fb4ff" stop-opacity="0"/></radialGradient>
<linearGradient id="fdl" x1="0" y1="0" x2="0" y2="1"><stop offset="0" stop-color="#7a98e6"/><stop offset=".3" stop-color="#5f80dc"/><stop offset="1" stop-color="#4a68c6"/></linearGradient>
<linearGradient id="fdr" x1="0" y1="0" x2="0" y2="1"><stop offset="0" stop-color="#f2f3fb"/><stop offset=".4" stop-color="#dcdff4"/><stop offset="1" stop-color="#aeb3de"/></linearGradient>
<linearGradient id="fold" x1="0" y1="0" x2="0" y2="1"><stop offset="0" stop-color="#a4c7e5"/><stop offset="1" stop-color="#82aed7"/></linearGradient>
<linearGradient id="silver" x1="0" y1="0" x2="0" y2="1"><stop offset="0" stop-color="#dcdcdc"/><stop offset="1" stop-color="#a2a2a2"/></linearGradient>
<radialGradient id="saf" cx=".5" cy=".4" r=".6"><stop offset="0" stop-color="#8a9cf0"/><stop offset=".6" stop-color="#3a4cc8"/><stop offset="1" stop-color="#1c2a9a"/></radialGradient>
<linearGradient id="gold" x1="0" y1="0" x2="1" y2="1"><stop offset="0" stop-color="#f6dc8a"/><stop offset=".5" stop-color="#c8962a"/><stop offset="1" stop-color="#8a5e10"/></linearGradient>
<radialGradient id="lnk" cx=".4" cy=".3" r=".8"><stop offset="0" stop-color="#b4e860"/><stop offset=".7" stop-color="#6cbc1e"/><stop offset="1" stop-color="#3f8a10"/></radialGradient>
<radialGradient id="sky" cx=".5" cy=".35" r=".7"><stop offset="0" stop-color="#5cd0f8"/><stop offset="1" stop-color="#12a0e6"/></radialGradient>
<linearGradient id="scr" x1="0" y1="0" x2="1" y2="1"><stop offset="0" stop-color="#1e62d8"/><stop offset=".5" stop-color="#3c9cf4"/><stop offset="1" stop-color="#0e3ea8"/></linearGradient>
<linearGradient id="note" x1="0" y1="0" x2="0" y2="1"><stop offset="0" stop-color="#2a5ce0"/><stop offset="1" stop-color="#0e2a9a"/></linearGradient>
<linearGradient id="trash" x1="0" y1="0" x2="1" y2="0"><stop offset="0" stop-color="#6a6c72"/><stop offset=".3" stop-color="#8a8c92"/><stop offset=".6" stop-color="#5a5c62"/><stop offset="1" stop-color="#74767c"/></linearGradient>
</defs>
<!-- shelf -->
<path d="M554 1020.500H1127Q1129.500 1020.500 1130 1022.500L1137.500 1047.500H544L551 1022.500Q551.500 1020.500 554 1020.500z" fill="url(#shelf)"/>
<path d="M554 1020.500Q551.500 1020.500 551 1022.500L544 1047.500H549L556.500 1020.500z" fill="url(#shl)"/>
<path d="M1127 1020.500Q1129.500 1020.500 1130 1022.500L1137.500 1047.500H1132.500L1124.500 1020.500z" fill="url(#shr)"/>
<rect x="553" y="1020.300" width="575" height=".7" fill="#a3a6ad"/>
<rect x="543.500" y="1046.800" width="594.500" height="1.300" fill="#c2c4c8"/>
<rect x="543" y="1048.100" width="595.500" height="2" fill="#38383a"/>
<!-- finder -->
<g id="i-finder"><rect x="566.300" y="1011" width="13" height="21" fill="url(#fdl)"/><rect x="579.300" y="1011" width="13" height="21" fill="url(#fdr)"/><path d="M581 1011C578.500 1015 577.500 1019 577.500 1022.500H580.500C580.200 1026 580.500 1030 582.500 1035.500" fill="none" stroke="#15161a" stroke-width="1"/><path d="M579.300 1011H581C578.500 1015 577.500 1019 577.500 1022.500H580.500C580.300 1025 580.400 1028.500 581.200 1032H579.300z" fill="url(#fdl)"/><path d="M570 1026C574 1028.800 584 1028.800 588.500 1025.600" fill="none" stroke="#15161a" stroke-width="1"/><rect x="572.800" y="1014.500" width="1" height="2.600" rx=".5" fill="#15161a"/><rect x="584.200" y="1014.500" width="1" height="2.600" rx=".5" fill="#15161a"/></g>
<!-- mail -->
<g transform="rotate(-9 613 1022)"><rect x="601.500" y="1008.500" width="23" height="27" fill="#f4f4f6" stroke="#c9c9cf" stroke-width=".6" stroke-dasharray="1.200 .8"/><rect x="603.300" y="1010.300" width="19.400" height="23.400" fill="#6a92e0"/><rect x="603.300" y="1024" width="19.400" height="9.700" fill="#3f68cc"/><path d="M609 1012.500C611 1013 612 1016 612.500 1019C615 1019.500 619 1022 621 1026C618 1025 615 1024.500 613.500 1024.800C613 1026.500 612 1027.500 610.500 1028C610.500 1026 609.500 1024 609.500 1022C608.500 1019 608 1015 609 1012.500z" fill="#7a6442"/><path d="M609.500 1013C610.800 1014 611.500 1016.500 611.800 1018.500L610 1018.800z" fill="#c9c4bc"/></g>
<!-- safari -->
<g><circle cx="647.500" cy="1022" r="13.300" fill="url(#gold)"/><circle cx="647.500" cy="1022" r="10.800" fill="url(#saf)"/><circle cx="647.500" cy="1022" r="12" fill="none" stroke="#fbeab0" stroke-width=".8"/><circle cx="647.500" cy="1007.600" r="1.300" fill="none" stroke="#b88a2a" stroke-width=".8"/><path d="M647.500 1012.500V1031.500M638 1022H657M640.800 1015.300L654.200 1028.700M654.200 1015.300L640.800 1028.700" stroke="#cfd6ff" stroke-width=".5" opacity=".7"/><path d="M653.800 1015L648.600 1023.200L646.400 1020.800z" fill="#f0552a"/><path d="M641.200 1029L648.600 1023.200L646.400 1020.800z" fill="#f4f4f4"/></g>
<!-- adium -->
<g><path d="M681.500 1006.500C683 1008 686 1009 688 1012.500C689.500 1015.500 688.500 1018 687 1020.500C690 1023 690.500 1028 689.500 1032C689 1035 686.500 1036.300 684.500 1036L678.500 1036C676.500 1036.300 674 1035 673.500 1032C672.500 1028 673 1023 676 1020.500C674.500 1018 673.500 1015.500 675 1012.500C677 1009 680 1008 681.500 1006.500z" fill="#4ea824" stroke="#2e7a12" stroke-width=".7"/><ellipse cx="679.300" cy="1015.300" rx="1.900" ry="2.300" fill="#fff"/><ellipse cx="683.700" cy="1015.300" rx="1.900" ry="2.300" fill="#fff"/><circle cx="679.800" cy="1015.700" r=".9" fill="#1a2a30"/><circle cx="683.300" cy="1015.700" r=".9" fill="#1a2a30"/><path d="M676 1021.500C678 1019.500 685 1019.500 687 1021.500C685 1024.300 678 1024.300 676 1021.500z" fill="#f09a30" stroke="#b4681a" stroke-width=".5"/><ellipse cx="681.500" cy="1029.500" rx="5" ry="5" fill="#5cb82e" opacity=".7"/></g>
<!-- linkinus -->
<g><path d="M715 1008.500C723 1008.500 729.500 1013 729.500 1019.500C729.500 1026 723 1030.500 715 1030.500C713 1030.500 711 1030.200 709.500 1029.700C708 1032 706 1034 703.500 1034.500C705 1032.500 705.500 1030 705 1027.800C702 1025.800 700.500 1023 700.500 1019.500C700.500 1013 707 1008.500 715 1008.500z" fill="url(#lnk)" stroke="#3a8212" stroke-width=".6"/><text x="710" y="1024" font-family="'DejaVu Sans','Liberation Sans',sans-serif" font-weight="bold" font-size="13" fill="#fff">#</text><path d="M716.500 1019H726.500V1035.500C724 1037 719 1037 716.500 1035.500z" fill="#d4d4d6" stroke="#9a9a9e" stroke-width=".5"/><rect x="718.500" y="1019.500" width="2.500" height="16" fill="#f4f4f4" opacity=".8"/><ellipse cx="721.500" cy="1019" rx="5" ry="1.200" fill="#eeeeee" stroke="#a0a0a4" stroke-width=".4"/><path d="M726.500 1024C729.500 1026 729.500 1033 727 1036.500" fill="none" stroke="#dcdcdc" stroke-width=".7"/></g>
<!-- skype -->
<g><circle cx="743.500" cy="1015" r="9" fill="url(#sky)"/><circle cx="755.500" cy="1029.500" r="9" fill="url(#sky)"/><circle cx="749.500" cy="1022" r="12.800" fill="url(#sky)"/><text x="749.500" y="1030" text-anchor="middle" font-family="'Liberation Sans',sans-serif" font-weight="bold" font-size="23" fill="#fff">S</text></g>
<!-- itunes -->
<g><circle cx="782.500" cy="1023.500" r="14" fill="#e4e6ea" stroke="#b4b6ba" stroke-width=".7"/><path d="M782.500 1023.500L770 1017A14 14 0 0 1 776 1011z" fill="#b8e8c0" opacity=".8"/><path d="M782.500 1023.500L776 1011A14 14 0 0 1 783 1009.500z" fill="#f0e0a0" opacity=".8"/><path d="M782.500 1023.500L795 1030A14 14 0 0 1 789 1036z" fill="#c0c8f0" opacity=".8"/><path d="M782.500 1023.500L789 1036A14 14 0 0 1 782 1037.500z" fill="#e8c0e0" opacity=".7"/><circle cx="782.500" cy="1023.500" r="4.500" fill="#c4c6ca" stroke="#9a9ca0" stroke-width=".5"/><circle cx="782.500" cy="1023.500" r="1.700" fill="#f4f4f4"/><path d="M781.500 1012L796 1008V1028.500C796 1031 793.500 1032.500 791.500 1032.500C789.500 1032.500 788 1031.500 788 1030C788 1028 790.500 1027 793.500 1027.500V1015.500L784 1018V1031.500C784 1034 781.500 1035.500 779.500 1035.500C777.500 1035.500 776 1034.500 776 1033C776 1031 778.500 1030 781.500 1030.500z" fill="url(#note)" stroke="#0c2080" stroke-width=".4"/></g>
<!-- screen sharing -->
<g><path d="M802.500 1013L829.500 1009.500L831 1029L804.500 1032.500z" fill="#c4c6ca"/><path d="M803.500 1014L828.600 1010.700L830 1027.300L805.300 1030.600z" fill="url(#scr)"/><path d="M808 1021.500C812 1016 822 1015.500 826 1019.500C822 1025 812 1026 808 1021.500z" fill="#9cc8f8" stroke="#0a2a7a" stroke-width=".7"/><circle cx="817" cy="1020" r="3.800" fill="#1a4ec0"/><circle cx="817" cy="1020" r="1.600" fill="#05103a"/><rect x="825.500" y="1022" width="6.500" height="14.500" rx="1.500" fill="#e2e2e4" stroke="#8a8a8e" stroke-width=".5"/><rect x="826.500" y="1023" width="4.500" height="6.500" fill="#2a2a30"/></g>
<!-- terminal -->
<g><rect x="836.800" y="1009.800" width="29.200" height="25.200" fill="url(#silver)"/><rect x="839" y="1012" width="24.800" height="20.800" fill="#101012"/><path d="M839 1012H863.800V1020L839 1027z" fill="#2a2a2e" opacity=".6"/><text x="840.500" y="1019.500" font-family="'Liberation Mono',monospace" font-weight="bold" font-size="8" fill="#f0f0f0">&gt;_</text></g>
<!-- spaces -->
<g><rect x="871" y="1009.800" width="28.700" height="25.200" rx="2.500" fill="#0c0c0e"/><rect x="873" y="1011.800" width="11.500" height="9.700" fill="#7a9ad8"/><rect x="886.200" y="1011.800" width="11.500" height="9.700" fill="#7a9ad8"/><rect x="873" y="1023.300" width="11.500" height="9.700" fill="#6a8acc"/><rect x="886.200" y="1023.300" width="11.500" height="9.700" fill="#6a8acc"/><rect x="875" y="1013.500" width="7.500" height="5" fill="#f0f0f0"/><rect x="890" y="1014" width="6" height="2.500" fill="#e8d040"/><rect x="888" y="1016" width="5" height="2" fill="#60c040"/><rect x="877" y="1025" width="5.500" height="4" fill="#e03020"/><rect x="875" y="1027" width="6" height="4" fill="#30a840"/></g>
<!-- sysprefs -->
<g><rect x="904.800" y="1009.600" width="29.200" height="25.400" fill="url(#silver)"/><rect x="907" y="1011.800" width="24.800" height="21" fill="#5a5c60"/><g transform="translate(919.500 1023.500)"><circle r="8.500" fill="none" stroke="#e6e6e8" stroke-width="3.500" stroke-dasharray="1.900 1.440"/><circle r="7" fill="none" stroke="#e6e6e8" stroke-width="2.500"/><path d="M0 0L0 -7M0 0L6.100 3.500M0 0L-6.100 3.500" stroke="#e6e6e8" stroke-width="2.600"/><circle r="2.200" fill="#f4f4f4"/><circle r=".9" fill="#6a6a6e"/></g><rect x="907" y="1011.800" width="24.800" height="21" fill="none" stroke="#3a3a3e" stroke-width=".6"/></g>
<!-- separator -->
<g fill="#abaeb6"><rect x="942" y="1023.500" width="5.400" height="1.200"/><rect x="941.300" y="1026" width="6.600" height="1"/><rect x="940.800" y="1028.200" width="7.500" height="1"/><rect x="940.300" y="1031" width="8.500" height="1.200"/><rect x="939.800" y="1034" width="9.400" height="1.400"/><rect x="939.200" y="1037.800" width="10.400" height="1.800"/><rect x="938.300" y="1042.300" width="11.800" height="2.600"/></g>
<!-- folders -->
<g id="fold1"><path d="M955.500 1013Q955.500 1011.300 957 1011.300H966.500Q967.800 1011.300 968.300 1012.500L968.800 1013.800H984.500Q986 1013.800 986 1015.300V1033Q986 1034.500 984.500 1034.500H956.500Q955 1034.500 955 1033z" fill="url(#fold)" stroke="#6f9cc8" stroke-width=".5"/><rect x="955.300" y="1015.500" width="30.500" height=".7" fill="#b8d6ee"/></g>
<g fill="none" stroke="#6c98c4" stroke-width="1.500"><path d="M970.500 1018L964.500 1032M970.500 1018L976.500 1032M962 1027.500H979"/></g>
<use href="#fold1" x="34"/><path d="M999 1018.500H1006L1009.500 1022V1032.500H999z" fill="#8ab4da" stroke="#6c98c4" stroke-width=".8"/>
<use href="#fold1" x="68"/><circle cx="1038.500" cy="1025" r="7.300" fill="#86b0d8" stroke="#6c98c4" stroke-width=".8"/><path d="M1037 1019.500H1040V1023.500H1042L1038.500 1027L1035 1023.500H1037zM1036.500 1028H1040.500V1031H1036.500z" fill="#a9cbe8"/>
<!-- doc thumb -->
<g><rect x="1057" y="1012" width="30.400" height="20.600" fill="#f2f3f6" stroke="#c0c2c8" stroke-width=".6"/><rect x="1057.300" y="1012.300" width="29.800" height="2.600" fill="#dfe3ee"/><rect x="1058.500" y="1016" width="3.500" height="15" fill="#e4e8f4"/><rect x="1063" y="1016" width="22" height="1.200" fill="#c9d4ee"/><rect x="1067" y="1019" width="2.200" height="2.200" fill="#5cc070"/><rect x="1067" y="1022" width="3" height="1.800" fill="#f0a040"/><rect x="1067" y="1027.500" width="2.200" height="3" fill="#4cb860"/><rect x="1071" y="1019.500" width="12" height=".8" fill="#d4d6dc"/><rect x="1071" y="1022.500" width="12" height=".8" fill="#d4d6dc"/><rect x="1071" y="1025.500" width="12" height=".8" fill="#d4d6dc"/><rect x="1071" y="1028.500" width="12" height=".8" fill="#d4d6dc"/><circle cx="1082" cy="1032.500" r="5" fill="url(#gold)"/><circle cx="1082" cy="1032.500" r="3.800" fill="url(#saf)"/><path d="M1084.500 1030L1082.500 1033L1081.500 1032z" fill="#f0552a"/><path d="M1079.500 1035L1082.500 1033L1081.500 1032z" fill="#fff"/></g>
<!-- trash -->
<g><path d="M1095 1012L1098 1035C1100 1037.500 1112.500 1037.500 1114.500 1035L1117.500 1012z" fill="url(#trash)" opacity=".8"/><g stroke="#34363c" stroke-width=".45" opacity=".75" fill="none"><path d="M1097.500 1014L1100 1036M1100.500 1015L1102.500 1036.700M1103.500 1015.500L1104.700 1037M1106.500 1015.600V1037M1109.500 1015.500L1108.300 1037M1112.500 1015L1110.700 1036.700M1115.500 1014L1113 1036"/><path d="M1095.500 1017C1100 1019.500 1112.500 1019.500 1117 1017M1096 1021C1100.500 1023.500 1112 1023.500 1116.500 1021M1096.500 1025C1101 1027.500 1111.500 1027.500 1116 1025M1097 1029C1101 1031.500 1111 1031.500 1115.500 1029"/></g><path d="M1097.600 1031.500L1098 1035C1100 1037.500 1112.500 1037.500 1114.500 1035L1114.900 1031.500C1112 1033.500 1100.500 1033.500 1097.600 1031.500z" fill="#cfd1d6" opacity=".8"/><ellipse cx="1106.200" cy="1012" rx="11.300" ry="3.600" fill="#34363c" stroke="#d9dbdf" stroke-width="1.200"/></g>
<!-- reflections -->
<g opacity=".33">
<rect x="566.300" y="1038.500" width="13" height="8.500" fill="#5f80dc"/><rect x="579.300" y="1038.500" width="13" height="8.500" fill="#dcdff4"/>
<rect x="602" y="1038" width="22" height="9" fill="#5a80d4"/>
<path d="M634.500 1047A13 10 0 0 1 660.500 1047z" fill="#b48a30"/><path d="M637.500 1047A10 8 0 0 1 657.500 1047z" fill="#4a5cd0"/>
<rect x="674" y="1038" width="15" height="9" rx="3" fill="#4ea824"/>
<path d="M702 1047C703 1041 709 1038 715 1038C721 1038 727 1041 728 1047z" fill="#6cbc1e"/>
<path d="M737.500 1047A12 9 0 0 1 761.500 1047z" fill="#20a8ea"/>
<path d="M769 1047A13.500 9 0 0 1 796 1047z" fill="#d0d4e0"/>
<rect x="805" y="1040" width="25" height="7" fill="#2a6ad8"/>
<rect x="836.800" y="1038" width="29.200" height="9" fill="#606266"/>
<rect x="871" y="1038" width="28.700" height="9" fill="#4a5a80"/>
<rect x="904.800" y="1038" width="29.200" height="9" fill="#7a7c80"/>
<rect x="955" y="1038" width="31" height="9" fill="#8ab6dc"/><rect x="989" y="1038" width="31" height="9" fill="#8ab6dc"/><rect x="1023" y="1038" width="31" height="9" fill="#8ab6dc"/>
<rect x="1057" y="1039" width="30.400" height="8" fill="#e8eaf0"/>
<path d="M1097.500 1047L1098.500 1039H1114L1115 1047z" fill="#6a6c72"/>
</g>
<!-- indicators -->
<g><ellipse cx="578.700" cy="1044.300" rx="5" ry="2.300" fill="url(#ind)"/><ellipse cx="612.700" cy="1044.300" rx="5" ry="2.300" fill="url(#ind)"/><ellipse cx="646.700" cy="1044.300" rx="5" ry="2.300" fill="url(#ind)"/><ellipse cx="680.700" cy="1044.300" rx="5" ry="2.300" fill="url(#ind)"/><ellipse cx="714.700" cy="1044.300" rx="5" ry="2.300" fill="url(#ind)"/>
<ellipse cx="578.700" cy="1049.600" rx="3.500" ry="1.200" fill="#e8f2ff"/><ellipse cx="612.700" cy="1049.600" rx="3.500" ry="1.200" fill="#e8f2ff"/><ellipse cx="646.700" cy="1049.600" rx="3.500" ry="1.200" fill="#e8f2ff"/><ellipse cx="680.700" cy="1049.600" rx="3.500" ry="1.200" fill="#e8f2ff"/><ellipse cx="714.700" cy="1049.600" rx="3.500" ry="1.200" fill="#e8f2ff"/></g>
</svg>

</body></html>
